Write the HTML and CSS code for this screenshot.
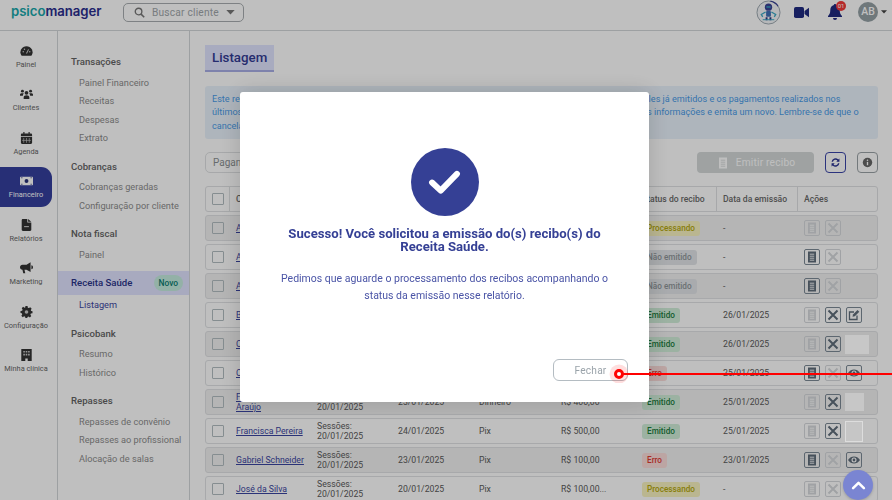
FILE: index.html
```html
<!DOCTYPE html>
<html lang="pt-BR">
<head>
<meta charset="utf-8">
<title>Psicomanager</title>
<link rel="stylesheet" href="styles.css">
</head>
<body>
<svg class="defs" width="0" height="0" aria-hidden="true">
  <symbol id="i-doc" viewBox="0 0 14 14"><path d="M3 1.500h8v11H3z" fill="currentColor"/><path class="doc-lines" d="M4.800 4.200h4.400M4.800 6.200h4.400M4.800 8.200h4.400M4.800 10.200h4.400" stroke-width=".9"/></symbol>
  <symbol id="i-x" viewBox="0 0 14 14"><path d="M2.500 2.500l9 9M11.500 2.500l-9 9" stroke="currentColor" stroke-width="2" fill="none"/></symbol>
  <symbol id="i-edit" viewBox="0 0 14 14"><path d="M10 7.500V11.500H2.500V4H7" stroke="currentColor" stroke-width="1.300" fill="none"/><path d="M5.500 8.800 6 6.500 10.500 2l1.800 1.800L7.800 8.300z" fill="currentColor"/></symbol>
  <symbol id="i-eye" viewBox="0 0 14 14"><path d="M1 7C2.600 4.500 4.700 3.500 7 3.500s4.400 1 6 3.500c-1.600 2.500-3.700 3.500-6 3.500S2.600 9.500 1 7z" fill="currentColor"/><circle cx="7" cy="7" r="2.500" fill="#fff"/><circle cx="7" cy="7" r="1.400" fill="currentColor"/></symbol>
</svg>

<div class="app">
  <header class="topbar">
    <div class="logo"><span class="logo-a">psico</span><span class="logo-b">manager</span></div>
    <div class="search">
      <svg class="search-ico" viewBox="0 0 14 14"><circle cx="5.800" cy="5.800" r="4.200" fill="none" stroke="currentColor" stroke-width="1.700"/><path d="M9 9l4 4" stroke="currentColor" stroke-width="2"/></svg>
      <span>Buscar cliente</span>
      <svg class="search-caret" viewBox="0 0 10 6"><path d="M0 0h10L5 5.500z" fill="currentColor"/></svg>
    </div>
    <div class="top-right">
      <svg class="robot" viewBox="0 0 26 26">
        <circle cx="13" cy="13" r="12" fill="#f4f6f8" stroke="#9aa6ae" stroke-width="1"/>
        <path d="M15 1.200A12 12 0 0 1 23 6.500" fill="none" stroke="#3a4296" stroke-width="1.200"/>
        <circle cx="13" cy="7.500" r="3.800" fill="#3a4296"/>
        <rect x="10.800" y="6.500" width="4.400" height="1.500" fill="#39a7c4"/>
        <rect x="10.500" y="11.500" width="5" height="6" rx="1" fill="#3f6fb5"/>
        <path d="M10 12.500 5.500 15l1.500 2.500M16 12.500 20.500 15 19 17.500" fill="none" stroke="#39a7c4" stroke-width="1.300"/>
        <path d="M11 18v3M15 18v3" stroke="#2d3580" stroke-width="2"/>
        <path d="M7 20.500h12" stroke="#39a7c4" stroke-width="1"/>
      </svg>
      <svg class="video" viewBox="0 0 15 11"><rect x="0" y="0" width="10" height="11" rx="1.800" fill="currentColor"/><path d="M10.500 4 15 .8v9.400L10.500 7z" fill="currentColor"/></svg>
      <div class="bell">
        <svg viewBox="0 0 14 16"><path d="M7 0c.7 0 1.100.5 1.100 1.100C10.400 1.600 11.700 3.500 11.700 6c0 3.500 1 4.500 2.300 6v1H0v-1c1.300-1.500 2.300-2.500 2.300-6 0-2.500 1.300-4.400 3.600-4.900C5.900.5 6.300 0 7 0z" fill="currentColor"/><path d="M5 14h4a2 2 0 0 1-4 0z" fill="currentColor"/></svg>
        <span class="bell-badge">01</span>
      </div>
      <div class="avatar">AB</div>
      <svg class="avatar-caret" viewBox="0 0 8 5"><path d="M0 0h8L4 4.500z" fill="currentColor"/></svg>
    </div>
  </header>

  <div class="layout">
    <nav class="rail">
      <a class="rail-item">
        <svg viewBox="0 0 16 14"><path d="M8 1a7.500 7.500 0 0 0-6.500 11.200c.2.300.5.500.9.500h11.200c.4 0 .7-.2.900-.5A7.500 7.500 0 0 0 8 1z" fill="currentColor"/><path d="M8 10l2.500-5" stroke="#c9c9c9" stroke-width="1.300"/><circle cx="4" cy="8" r=".9" fill="#c9c9c9"/><circle cx="5.500" cy="4.800" r=".9" fill="#c9c9c9"/><circle cx="12" cy="8" r=".9" fill="#c9c9c9"/></svg>
        <span>Painel</span></a>
      <a class="rail-item">
        <svg viewBox="0 0 16 14"><g fill="currentColor"><circle cx="8" cy="5.500" r="2.300"/><circle cx="3" cy="3.500" r="1.800"/><circle cx="13" cy="3.500" r="1.800"/><path d="M4.500 13v-1.800C4.500 9.500 6 8.500 8 8.500s3.500 1 3.500 2.700V13zM0 9V7.500C0 6.500 1 6 3 6c.7 0 1.300.1 1.700.300-.6.500-1 1.400-1.200 2.700zM16 9V7.500C16 6.500 15 6 13 6c-.7 0-1.300.1-1.700.300.6.500 1 1.400 1.200 2.700z"/></g></svg>
        <span>Clientes</span></a>
      <a class="rail-item">
        <svg viewBox="0 0 14 15"><path d="M3 0h1.500v2h5V0H11v2h1.500c.8 0 1.500.7 1.500 1.500V5H0V3.500C0 2.700.7 2 1.500 2H3zM0 6h14v7.500c0 .8-.7 1.500-1.500 1.500h-11C.7 15 0 14.300 0 13.500z" fill="currentColor"/><path d="M3.500 7.500v6M7 7.500v6M10.500 7.500v6M1.500 10.500h11" stroke="#c9c9c9" stroke-width=".8"/></svg>
        <span>Agenda</span></a>
      <a class="rail-item is-active">
        <svg viewBox="0 0 18 12"><rect width="18" height="12" rx="1" fill="currentColor"/><circle cx="9" cy="6" r="2.700" fill="#283078"/><path d="M1.500 1.500h2M14.500 1.500h2M1.500 10.500h2M14.500 10.500h2" stroke="#283078"/></svg>
        <span>Financeiro</span></a>
      <a class="rail-item">
        <svg viewBox="0 0 12 15"><path d="M0 1.500C0 .7.700 0 1.500 0H7v4.500h5v9c0 .8-.7 1.500-1.500 1.500h-9C.7 15 0 14.300 0 13.500zM8 0l4 3.500H8z" fill="currentColor"/><path d="M3 9.500h6" stroke="#c9c9c9" stroke-width="1.400"/></svg>
        <span>Relatórios</span></a>
      <a class="rail-item">
        <svg viewBox="0 0 16 14"><path d="M13 0v12L8 9H5.500l1 4.500H4L3 9C1.300 9 0 7.600 0 6s1.300-3 3-3h5zM14 3.500c1.200 0 2 1.100 2 2.500s-.8 2.500-2 2.500z" fill="currentColor"/></svg>
        <span>Marketing</span></a>
      <a class="rail-item">
        <svg viewBox="0 0 16 16"><path d="M6.600 0h2.800l.4 2.200 1.400.6L13 1.600 14.900 3.500l-1.200 1.800.6 1.400L16 7v2.700l-2.200.4-.6 1.400 1.200 1.800-1.900 1.900-1.800-1.200-1.400.6-.4 1.900H6.600l-.4-2.200-1.400-.6L3 14.900 1.100 13l1.200-1.800-.6-1.400L0 9.400V6.600l2.200-.4.600-1.400L1.600 3 3.500 1.100l1.800 1.200 1-.4z" fill="currentColor"/><circle cx="8" cy="8" r="2.400" fill="#c9c9c9"/></svg>
        <span>Configuração</span></a>
      <a class="rail-item">
        <svg viewBox="0 0 13 15"><path d="M0 0h13v15H8v-3H5v3H0z" fill="currentColor"/><path d="M2.500 2.500h2v2h-2zM5.500 2.500h2v2h-2zM8.500 2.500h2v2h-2zM2.500 6h2v2h-2zM5.500 6h2v2h-2zM8.500 6h2v2h-2z" fill="#c9c9c9"/></svg>
        <span>Minha clínica</span></a>
    </nav>

    <aside class="submenu">
      <h4>Transações</h4>
      <a>Painel Financeiro</a><a>Receitas</a><a>Despesas</a><a>Extrato</a>
      <h4>Cobranças</h4>
      <a>Cobranças geradas</a><a>Configuração por cliente</a>
      <h4>Nota fiscal</h4>
      <a>Painel</a>
      <h4 class="sub-active">Receita Saúde <span class="novo">Novo</span></h4>
      <a class="sub-current">Listagem</a>
      <h4>Psicobank</h4>
      <a>Resumo</a><a>Histórico</a>
      <h4>Repasses</h4>
      <a>Repasses de convênio</a><a>Repasses ao profissional</a><a>Alocação de salas</a>
    </aside>

    <main class="main">
      <h1 class="title">Listagem</h1>
      <div class="alert">Este relatório apresenta todos os recibos já solicitados pela sua clínica para o Receita Saúde, incluindo aqueles já emitidos e os pagamentos realizados nos<br>últimos três meses. Caso você encontre algum erro em um recibo emitido, solicite o cancelamento, corrija as informações e emita um novo. Lembre-se de que o<br>cancelamento é definitivo.</div>
      <div class="toolbar">
        <div class="filter">Pagamento</div>
        <button class="emit"><svg viewBox="0 0 14 14"><use href="#i-doc"/></svg>Emitir recibo</button>
        <button class="square square-primary"><svg viewBox="0 0 14 14"><path d="M2 6a5 5 0 0 1 8.500-2.800L12 2v4H8l1.500-1.500A3.300 3.300 0 0 0 3.800 6zM12 8a5 5 0 0 1-8.500 2.800L2 12V8h4l-1.500 1.500A3.300 3.300 0 0 0 10.200 8z" fill="currentColor"/></svg></button>
        <button class="square"><svg viewBox="0 0 14 14"><circle cx="7" cy="7" r="6" fill="currentColor"/><circle cx="7" cy="4.200" r="1" fill="#fff"/><path d="M7 6.200v4.300" stroke="#fff" stroke-width="1.700"/></svg></button>
      </div>

      <div class="thead">
        <div class="cell cell-check"><span class="check"></span></div>
        <div class="cell">Cliente</div><div class="cell">Referência</div><div class="cell">Pagamento</div><div class="cell">Forma</div><div class="cell">Valor</div><div class="cell">Status do recibo</div><div class="cell">Data da emissão</div><div class="cell">Ações</div>
      </div>

      <div class="row alt">
        <div class="c-check"><span class="check"></span></div><a class="name">Ana Carvalho</a><div class="refs">Sessões:<br>20/01/2025</div><div>25/01/2025</div><div>Pix</div><div>R$ 200,00</div>
        <div><span class="badge b-proc">Processando</span></div><div>-</div>
        <div class="acts"><span class="act off"><svg><use href="#i-doc"/></svg></span><span class="act off"><svg><use href="#i-x"/></svg></span></div>
      </div>
      <div class="row">
        <div class="c-check"><span class="check"></span></div><a class="name">Ana Souza</a><div class="refs">Sessões:<br>20/01/2025</div><div>25/01/2025</div><div>Pix</div><div>R$ 200,00</div>
        <div><span class="badge b-none">Não emitido</span></div><div>-</div>
        <div class="acts"><span class="act"><svg><use href="#i-doc"/></svg></span><span class="act off"><svg><use href="#i-x"/></svg></span></div>
      </div>
      <div class="row alt">
        <div class="c-check"><span class="check"></span></div><a class="name">André Lima</a><div class="refs">Sessões:<br>20/01/2025</div><div>25/01/2025</div><div>Pix</div><div>R$ 200,00</div>
        <div><span class="badge b-none">Não emitido</span></div><div>-</div>
        <div class="acts"><span class="act"><svg><use href="#i-doc"/></svg></span><span class="act off"><svg><use href="#i-x"/></svg></span></div>
      </div>
      <div class="row">
        <div class="c-check"><span class="check"></span></div><a class="name">Bruna Costa</a><div class="refs">Sessões:<br>20/01/2025</div><div>25/01/2025</div><div>Pix</div><div>R$ 200,00</div>
        <div><span class="badge b-ok">Emitido</span></div><div>26/01/2025</div>
        <div class="acts"><span class="act off"><svg><use href="#i-doc"/></svg></span><span class="act"><svg><use href="#i-x"/></svg></span><span class="act"><svg><use href="#i-edit"/></svg></span></div>
      </div>
      <div class="row alt">
        <div class="c-check"><span class="check"></span></div><a class="name">Carla Dias</a><div class="refs">Sessões:<br>20/01/2025</div><div>25/01/2025</div><div>Pix</div><div>R$ 200,00</div>
        <div><span class="badge b-ok">Emitido</span></div><div>26/01/2025</div>
        <div class="acts"><span class="act off"><svg><use href="#i-doc"/></svg></span><span class="act"><svg><use href="#i-x"/></svg></span><span class="blank blank-a"></span></div>
      </div>
      <div class="row">
        <div class="c-check"><span class="check"></span></div><a class="name">Carlos Melo</a><div class="refs">Sessões:<br>20/01/2025</div><div>25/01/2025</div><div>Pix</div><div>R$ 200,00</div>
        <div><span class="badge b-err">Erro</span></div><div>25/01/2025</div>
        <div class="acts"><span class="act"><svg><use href="#i-doc"/></svg></span><span class="act off"><svg><use href="#i-x"/></svg></span><span class="act"><svg><use href="#i-eye"/></svg></span></div>
      </div>
      <div class="row alt">
        <div class="c-check"><span class="check"></span></div><a class="name name-wrap">Fernanda<br>Araújo</a><div class="refs">Sessões:<br>20/01/2025</div><div>23/01/2025</div><div>Dinheiro</div><div>R$ 400,00</div>
        <div><span class="badge b-ok">Emitido</span></div><div>25/01/2025</div>
        <div class="acts"><span class="act off"><svg><use href="#i-doc"/></svg></span><span class="act"><svg><use href="#i-x"/></svg></span><span class="blank blank-b"></span></div>
      </div>
      <div class="row">
        <div class="c-check"><span class="check"></span></div><a class="name">Francisca Pereira</a><div class="refs">Sessões:<br>20/01/2025</div><div>24/01/2025</div><div>Pix</div><div>R$ 500,00</div>
        <div><span class="badge b-ok">Emitido</span></div><div>25/01/2025</div>
        <div class="acts"><span class="act off"><svg><use href="#i-doc"/></svg></span><span class="act"><svg><use href="#i-x"/></svg></span><span class="blank blank-c"></span></div>
      </div>
      <div class="row alt">
        <div class="c-check"><span class="check"></span></div><a class="name">Gabriel Schneider</a><div class="refs">Sessões:<br>20/01/2025</div><div>23/01/2025</div><div>Pix</div><div>R$ 100,00</div>
        <div><span class="badge b-err">Erro</span></div><div>23/01/2025</div>
        <div class="acts"><span class="act"><svg><use href="#i-doc"/></svg></span><span class="act off"><svg><use href="#i-x"/></svg></span><span class="act"><svg><use href="#i-eye"/></svg></span></div>
      </div>
      <div class="row">
        <div class="c-check"><span class="check"></span></div><a class="name">José da Silva</a><div class="refs">Sessões:<br>20/01/2025</div><div>20/01/2025</div><div>Pix</div><div>R$ 100,00...</div>
        <div><span class="badge b-proc">Processando</span></div><div>-</div>
        <div class="acts"><span class="act off"><svg><use href="#i-doc"/></svg></span><span class="act off"><svg><use href="#i-x"/></svg></span></div>
      </div>
    </main>
  </div>
</div>

<div class="overlay">
  <div class="modal">
    <div class="success"><svg viewBox="0 0 30 24"><path d="M3.500 12.500 11.500 20 26.500 4.500" fill="none" stroke="#fff" stroke-width="5.500" stroke-linecap="round" stroke-linejoin="round"/></svg></div>
    <h2 class="modal-title">Sucesso! Você solicitou a emissão do(s) recibo(s) do Receita Saúde.</h2>
    <p class="modal-text">Pedimos que aguarde o processamento dos recibos acompanhando o status da emissão nesse relatório.</p>
    <div class="modal-foot"><button class="close">Fechar</button></div>
  </div>
</div>

<button class="fab"><svg viewBox="0 0 16 10"><path d="M2 8l6-6 6 6" fill="none" stroke="#fff" stroke-width="2.800" stroke-linecap="round" stroke-linejoin="round"/></svg></button>
<div class="pointer"><span class="pointer-line"></span><span class="pointer-dot"></span></div>
</body>
</html>
```
FILE: styles.css
```css
* { box-sizing: border-box; }
html, body { margin: 0; height: 100%; overflow: hidden; background: #fff; }
body { font-family: Roboto, "Liberation Sans", sans-serif; color: #444; width: 892px; height: 500px; position: relative; }
.defs { position: absolute; }
.doc-lines { stroke: var(--doc-line, #fff); }
a { text-decoration: none; color: inherit; }
h1, h2, h4, p { margin: 0; }
button { font-family: inherit; }

.app { height: 500px; overflow: hidden; display: flex; flex-direction: column; }

/* top bar */
.topbar { height: 31px; flex: none; display: flex; align-items: center; border-bottom: 1px solid #d2d6d8; background: #fff; padding-left: 11px; }
.logo { width: 112px; font-family: Inter, sans-serif; font-weight: 600; font-size: 13.200px; letter-spacing: -.05px; margin-top: -8px; white-space: nowrap; }
.logo-a { color: #18a7aa; }
.logo-b { color: #2a2d8e; }
.search { width: 121px; height: 19px; border: 1px solid #a8adb0; border-radius: 5px; display: flex; align-items: center; font-size: 10.200px; color: #a0a6aa; padding-left: 10px; letter-spacing: .2px; margin-top: -6px; }
.search-ico { width: 11px; height: 11px; margin-right: 7px; color: #777; }
.search-caret { width: 9px; height: 5px; margin-left: 7px; color: #777; }
.top-right { margin-left: auto; display: flex; align-items: center; margin-top: -6px; padding-right: 5px; }
.robot { width: 25px; height: 25px; margin-right: 13px; }
.video { width: 15px; height: 11px; color: #1f2a80; margin-right: 19px; }
.bell { position: relative; width: 14px; height: 16px; color: #1f2a80; margin-right: 16px; }
.bell svg { width: 14px; height: 16px; display: block; }
.bell-badge { position: absolute; left: 8px; top: -3px; width: 10px; height: 10px; border-radius: 50%; background: #f23a3a; color: #fff; font-size: 6px; line-height: 10px; text-align: center; }
.avatar { width: 20px; height: 20px; border-radius: 50%; background: #94a0a5; color: #fff; font-size: 10.500px; font-weight: 500; line-height: 20px; text-align: center; }
.avatar-caret { width: 6px; height: 4px; margin-left: 3px; color: #444; }

/* layout */
.layout { flex: 1; display: flex; min-height: 0; }
.rail { width: 58px; flex: none; border-right: 1px solid #d2d6d8; padding-top: 5.500px; display: flex; flex-direction: column; }
.rail-item { height: 40px; margin-bottom: 3.500px; display: flex; flex-direction: column; align-items: center; justify-content: center; font-size: 7.400px; width: 52px; border-radius: 0 11px 11px 0; gap: 3px; white-space: nowrap; color: #666; }
.rail-item svg { width: 13px; height: 12px; color: #333; }
.rail-item.is-active { background: #353f9e; color: #fff; }
.rail-item.is-active svg { color: #fff; }

.submenu { width: 132px; flex: none; border-right: 1px solid #d2d6d8; padding: 23px 0 0 0; display: flex; flex-direction: column; font-size: 9.200px; }
.submenu h4 { font-size: 9.600px; font-weight: 500; color: #636363; padding-left: 13px; height: 15px; line-height: 15px; margin-bottom: 4.500px; }
.submenu a { padding-left: 21px; height: 18.500px; line-height: 18.500px; color: #8c8c8c; }
.submenu a + h4 { margin-top: 11px; }
.submenu .sub-active { background: #e0e3ff; color: #2a3388; height: 24px; line-height: 24px; display: flex; align-items: center; justify-content: space-between; padding-right: 6px; margin: 0 0 1px; }
.submenu a + h4.sub-active { margin-top: 7px; }
.novo { background: #c5ecdf; color: #0a7c70; font-size: 8.400px; border-radius: 8px; padding: 0 5px; height: 16px; line-height: 16px; }
.sub-current { color: #3b45a0 !important; }

.main { flex: 1; min-width: 0; padding: 14px 14px 0 15px; }
.title { display: inline-block; height: 27px; line-height: 26px; background: #e1e4ff; border-bottom: 2px solid #a9aee6; padding: 0 7px; color: #323b94; font-size: 13.300px; font-weight: 500; vertical-align: top; }
.alert { margin-top: 14px; height: 53px; background: #e9f2fb; border-radius: 3px; padding: 7px; color: #4a9be8; font-size: 9.100px; line-height: 13.300px; white-space: nowrap; overflow: hidden; }
.toolbar { margin-top: 13px; height: 21px; display: flex; align-items: center; }
.filter { width: 180px; height: 21px; border: 1px solid #dfe1e3; border-radius: 5px; font-size: 10px; line-height: 19px; color: #8a8f92; padding-left: 7px; }
.emit { margin-left: auto; width: 117px; height: 21px; border: 0; border-radius: 4px; background: #d4d9d9; color: #fff; font-size: 10.200px; display: flex; align-items: center; justify-content: center; gap: 6px; letter-spacing: .2px; --doc-line: #d4d9d9; }
.emit svg { width: 14px; height: 14px; color: #fff; }
.square { width: 21px; height: 21px; border: 1px solid #9aa2a6; background: #fff; border-radius: 4px; margin-left: 11px; padding: 0; display: flex; align-items: center; justify-content: center; color: #666; }
.square svg { width: 11px; height: 11px; }
.square-primary { border-color: #3a45a8; color: #283190; margin-left: 11px; }

.thead, .row { display: grid; grid-template-columns: 23px 81px 81px 81px 82px 81px 81px 81px 1fr; width: 673px; }
.thead { margin-top: 13px; height: 26px; border: 1px solid #dfe1e3; border-radius: 3px; align-items: stretch; font-size: 8.600px; font-weight: 500; color: #6a6a6a; }
.cell { border-left: 1px solid #dfe1e3; padding-left: 6px; line-height: 24px; white-space: nowrap; }
.cell-check, .c-check { border: 0; padding: 0; display: flex; align-items: center; justify-content: center; }
.check { width: 12px; height: 12px; border: 1px solid #b2bcc0; border-radius: 1px; display: block; }

.row { margin-top: 3px; height: 26px; border: 1px solid #e0e2e4; border-radius: 3px; align-items: center; font-size: 8.700px; line-height: 10.500px; color: #5a5a5a; }
.row > div:not(.c-check) { padding-left: 7px; }
.row.alt { background: #f2f2f2; }
.name { padding-left: 7px; color: #3a44a0; text-decoration: underline; white-space: nowrap; overflow: hidden; }
.refs { white-space: nowrap; }
.badge { display: inline-block; height: 15px; line-height: 15px; border-radius: 3px; padding: 0 5px; font-size: 8.200px; font-weight: 500; white-space: nowrap; }
.b-proc { background: #f8f3c0; color: #b5a80c; }
.b-none { background: #e2e5e8; color: #8f969a; }
.b-ok { background: #d0eed9; color: #1c7c3c; }
.b-err { background: #fbdcda; color: #e03b33; }

.acts { display: flex; gap: 5px; align-items: center; }
.act { width: 16px; height: 16px; border: 1px solid #7c8a96; border-radius: 2px; background: transparent; color: #5f6d7a; display: block; }
.act svg { width: 14px; height: 14px; display: block; }
.act.off { border-color: #d6d9dc; color: #d6d9dc; }
/* pale placeholders that sit above the dimming layer */
.blank { display: block; margin-left: -1px; position: relative; z-index: 6; background: rgba(255, 255, 255, .25); }
.blank-a { width: 24px; height: 19px; }
.blank-b { width: 19px; height: 18px; }
.blank-c { width: 18px; height: 21px; border: 1px solid rgba(255, 255, 255, .4); background: rgba(255, 255, 255, .12); }

/* overlay layer */
.overlay { position: absolute; inset: 0; background: rgba(0, 0, 0, .25); backdrop-filter: blur(.6px); padding: 92px 0 0 240px; z-index: 5; }
.modal { width: 409px; height: 310px; background: #fff; border-radius: 3px; box-shadow: 0 0 22px rgba(0, 0, 0, .16); padding: 56px 30px 21px; display: flex; flex-direction: column; align-items: center; text-align: center; }
.success { width: 68px; height: 68px; flex: none; border-radius: 50%; background: #354095; display: flex; align-items: center; justify-content: center; }
.success svg { width: 33px; height: 26px; }
.modal-title { margin-top: 11px; color: #354095; font-size: 13.150px; font-weight: 700; line-height: 13.400px; width: 340px; }
.modal-text { margin-top: 17px; color: #4a54a6; font-size: 10.500px; line-height: 16.800px; width: 345px; }
.modal-foot { margin-top: auto; align-self: stretch; display: flex; justify-content: flex-end; margin-right: -9px; }
.close { width: 75px; height: 22px; border: 1px solid #b4bcc2; border-radius: 6px; background: #fff; color: #9aa3aa; font-size: 10.200px; padding: 0; letter-spacing: .2px; }

.fab { position: absolute; left: 843px; top: 470px; width: 30px; height: 30px; border: 0; border-radius: 50%; background: #7a85d2; padding: 0; z-index: 6; display: flex; align-items: center; justify-content: center; box-shadow: 0 1px 3px rgba(0,0,0,.2); }
.fab svg { width: 15px; height: 9px; }

.pointer { position: absolute; left: 619px; top: 374px; width: 273px; height: 0; z-index: 7; }
.pointer-line { position: absolute; left: 0; top: -1.500px; width: 273px; height: 2.500px; background: #f00; }
.pointer-dot { position: absolute; left: -5px; top: -5.500px; width: 10px; height: 10px; border-radius: 50%; background: #fff; border: 3px solid #f00; box-shadow: 0 0 0 4.500px rgba(255, 0, 0, .13); }
```
